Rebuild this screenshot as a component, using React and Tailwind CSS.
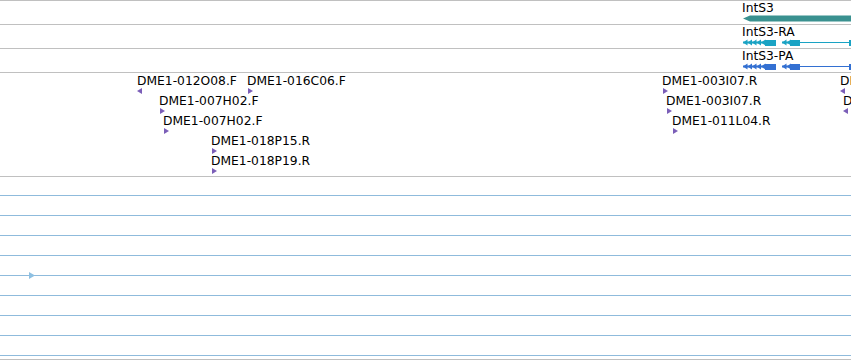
import React from "react";

const FONT = { fontFamily: '"DejaVu Sans", "Liberation Sans", sans-serif' };

function Arrow({ dir, color = "#7b5eb8", w = 5, h = 6 }) {
  const pts = dir === "r" ? `0,0 ${w},${h / 2} 0,${h}` : `${w},0 0,${h / 2} ${w},${h}`;
  return (
    <svg className="block" width={w} height={h}>
      <polygon points={pts} fill={color} />
    </svg>
  );
}

function Feature({ x, y, label, dir }) {
  return (
    <div className="absolute flex flex-col items-start" style={{ left: x, top: y }}>
      <span className="whitespace-nowrap text-[12.3px] leading-[13px] text-black">{label}</span>
      <div className={dir === "r" ? "ml-[1px]" : ""}>
        <Arrow dir={dir} />
      </div>
    </div>
  );
}

function Transcript({ color }) {
  const arrows = (tips) =>
    tips.map((t) => <polygon key={t} points={`${t},3.5 ${t + 4.5},0.5 ${t + 4.5},6.5`} fill={color} />);
  return (
    <svg className="block" width="109" height="8">
      <rect x="1" y="2.5" width="23" height="2" fill={color} />
      {arrows([1, 5.5, 10, 14.5, 19])}
      <rect x="23" y="1" width="11" height="6" fill={color} />
      <rect x="40" y="2.5" width="9" height="2" fill={color} />
      {arrows([40, 44.5])}
      <rect x="48" y="1" width="10" height="6" fill={color} />
      <rect x="58" y="3" width="51" height="1" fill={color} />
      <rect x="107" y="1" width="2" height="6" fill={color} />
    </svg>
  );
}

function TrackRow({ label, children }) {
  return (
    <div className="h-[24px] border-t border-[#c0c0c0] pl-[742px] pt-[1px] flex flex-col gap-[0px]">
      <span className="whitespace-nowrap text-[12.3px] leading-[12px] text-black">{label}</span>
      <div className="mt-[1px]">{children}</div>
    </div>
  );
}

const features = [
  { x: 137, y: 2, label: "DME1-012O08.F", dir: "l" },
  { x: 247, y: 2, label: "DME1-016C06.F", dir: "r" },
  { x: 159, y: 22, label: "DME1-007H02.F", dir: "r" },
  { x: 163, y: 42, label: "DME1-007H02.F", dir: "r" },
  { x: 211, y: 62, label: "DME1-018P15.R", dir: "r" },
  { x: 211, y: 82, label: "DME1-018P19.R", dir: "r" },
  { x: 662, y: 2, label: "DME1-003I07.R", dir: "r" },
  { x: 666, y: 22, label: "DME1-003I07.R", dir: "r" },
  { x: 672, y: 42, label: "DME1-011L04.R", dir: "r" },
  { x: 840, y: 2, label: "DME1-003I07.R", dir: "l" },
  { x: 843, y: 22, label: "DME1-003I07.R", dir: "l" },
];

export default function App() {
  return (
    <div className="w-[851px] h-[360px] bg-white overflow-hidden" style={FONT}>
      <TrackRow label="IntS3">
        <svg className="block" width="109" height="8">
          <polygon points="1,3.5 8,0.5 109,0.5 109,6.5 8,6.5" fill="#3a9190" />
        </svg>
      </TrackRow>
      <TrackRow label="IntS3-RA">
        <Transcript color="#1aa3c4" />
      </TrackRow>
      <TrackRow label="IntS3-PA">
        <Transcript color="#3370d2" />
      </TrackRow>
      <div className="relative h-[104px] border-t border-[#c0c0c0] overflow-hidden">
        {features.map((f, i) => (
          <Feature key={i} {...f} />
        ))}
      </div>
      <div className="relative border-t border-[#c0c0c0]">
        <div className="h-[18px]" />
        {Array.from({ length: 8 }).map((_, i) => (
          <div key={i} className="h-[20px] border-t border-[#8fbbdc]" />
        ))}
        <div className="h-[4px] border-t border-[#8fbbdc]" />
        <div className="h-[1px] bg-[#c0c0c0]" />
        <div className="absolute left-[29px] top-[95px]">
          <Arrow dir="r" color="#8ec0e2" w={6} h={7} />
        </div>
      </div>
    </div>
  );
}
